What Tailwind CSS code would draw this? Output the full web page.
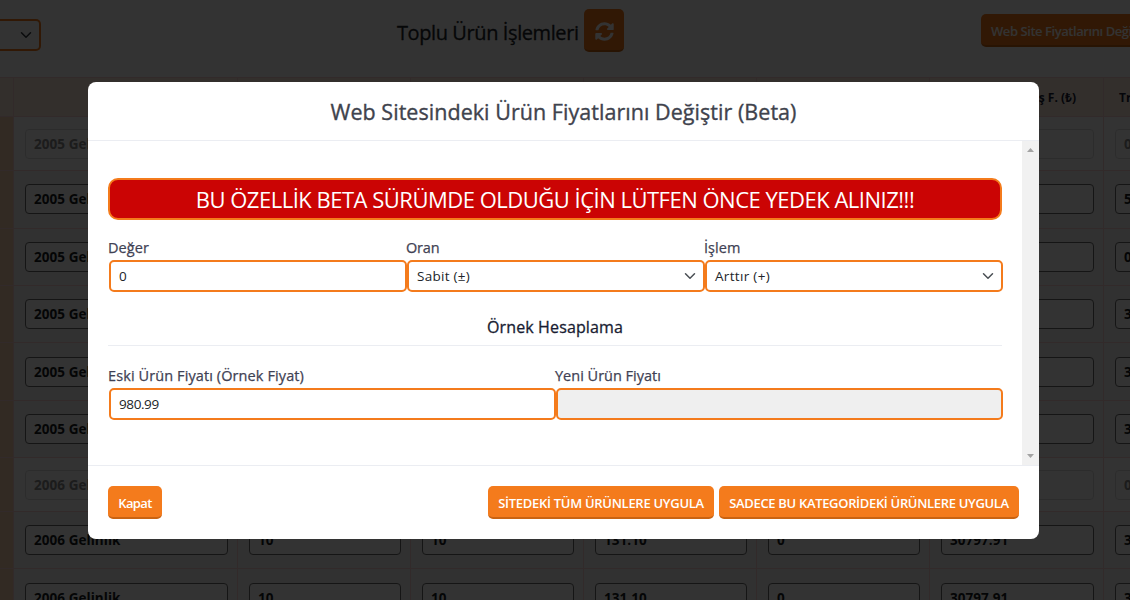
<!DOCTYPE html>
<html lang="tr">
<head>
<meta charset="utf-8">
<title>Toplu Ürün İşlemleri</title>
<script src="https://cdn.jsdelivr.net/npm/@tailwindcss/browser@4"></script>
</head>
<body class="relative h-[600px] w-[1130px] overflow-hidden bg-white font-['Open_Sans','Noto_Sans',sans-serif]">
<main class="w-[1130px] overflow-hidden">
  <header class="flex h-[77px] items-start">
    <div class="mt-[19px] flex h-8 w-[41px] shrink-0 items-center justify-end rounded-r-[5px] border-2 border-l-0 border-[#f47b1c] pr-[7px]">
      <svg class="h-3 w-3" viewBox="0 0 16 16" fill="none" stroke="#343a40" stroke-width="2" stroke-linecap="round" stroke-linejoin="round"><path d="M2 5l6 6 6-6"/></svg>
    </div>
    <h1 class="ml-[356px] mt-[17px] w-[187px] shrink-0 whitespace-nowrap text-[20px] font-medium leading-8 tracking-[-0.405px] text-[#212529] [-webkit-text-stroke:0.3px]">Toplu Ürün İşlemleri</h1>
    <button class="mt-[9px] flex h-[43px] w-10 shrink-0 items-center justify-center rounded-[5px] border-b-2 border-[#c96312] bg-[#f47b1c] pt-[3px]">
      <svg class="h-[19px] w-[19px]" viewBox="0 0 512 512" fill="#fff"><path d="M370.72 133.28C339.458 104.008 298.888 87.962 255.848 88c-77.458.068-144.328 53.178-162.791 126.85-1.344 5.363-6.122 9.15-11.651 9.15H24.103c-7.498 0-13.194-6.807-11.807-14.176C33.933 94.924 134.813 8 256 8c66.448 0 126.791 26.136 171.315 68.685L463.03 40.97C478.149 25.851 504 36.559 504 57.941V192c0 13.255-10.745 24-24 24H345.941c-21.382 0-32.09-25.851-16.971-40.971l41.75-41.749zM32 296h134.059c21.382 0 32.09 25.851 16.971 40.971l-41.75 41.75c31.262 29.273 71.835 45.319 114.876 45.28 77.418-.07 144.315-53.144 162.787-126.849 1.344-5.363 6.122-9.15 11.651-9.15h57.304c7.498 0 13.194 6.807 11.807 14.176C478.067 417.076 377.187 504 256 504c-66.448 0-126.791-26.136-171.315-68.685L48.97 471.03C33.851 486.149 8 475.441 8 454.059V320c0-13.255 10.745-24 24-24z"/></svg>
    </button>
    <button class="ml-[357px] mt-[14px] h-[33px] shrink-0 whitespace-nowrap rounded-[5px] border-b-2 border-[#c96312] bg-[#f47b1c] px-[10px] pt-[5px] text-[13px] font-semibold tracking-[-0.44px] text-white">Web Site Fiyatlarını Değiştir</button>
  </header>
  <div id="grid" class="w-[1290px]"></div>
</main>

<div class="absolute inset-0 bg-black/80"></div>

<section class="absolute left-[88px] top-[82px] flex h-[457px] w-[951px] flex-col overflow-hidden rounded-[8px] bg-white text-[#3f4254]">
  <header class="flex h-[59px] shrink-0 items-center justify-center border-b border-[#ebedf2] pt-[3px] text-[21.5px] font-medium text-[#3f434d] [-webkit-text-stroke:0.35px]"><span class="whitespace-nowrap tracking-[0.045px]">Web Sitesindeki Ürün Fiyatlarını Değiştir (Beta)</span></header>
  <div class="flex h-[324px] shrink-0">
    <div class="flex w-[934px] flex-col px-5 pt-[37px]">
      <div class="flex h-[42px] w-[894px] items-center justify-center rounded-[10px] border-2 border-[#f47b1c] bg-[#cb0404] pt-px text-[22px] text-white"><span class="whitespace-nowrap tracking-[-0.495px]">BU ÖZELLİK BETA SÜRÜMDE OLDUĞU İÇİN LÜTFEN ÖNCE YEDEK ALINIZ!!!</span></div>
      <div class="mt-[18px] flex text-[14.5px] font-medium leading-[20px]">
        <label class="w-[298px]"><span class="tracking-[0.1px] [-webkit-text-stroke:0.25px]">Değer</span>
          <span class="ml-px mt-[2px] flex h-8 w-[298px] items-center rounded-[5px] border-2 border-[#f47b1c] px-2 text-[13.5px] font-normal text-[#212529]">0</span></label>
        <label class="w-[298px]"><span class="tracking-[-0.2px] [-webkit-text-stroke:0.25px]">Oran</span>
          <span class="ml-px mt-[2px] flex h-8 w-[298px] items-center justify-between rounded-[5px] border-2 border-[#f47b1c] pl-2 pr-[7px] text-[13.5px] font-normal text-[#212529]"><span class="tracking-[0.28px]">Sabit (±)</span>
          <svg class="h-3 w-3" viewBox="0 0 16 16" fill="none" stroke="#4a4f54" stroke-width="2" stroke-linecap="round" stroke-linejoin="round"><path d="M2 5l6 6 6-6"/></svg></span></label>
        <label class="w-[298px]"><span class="tracking-[0.05px] [-webkit-text-stroke:0.25px]">İşlem</span>
          <span class="ml-px mt-[2px] flex h-8 w-[298px] items-center justify-between rounded-[5px] border-2 border-[#f47b1c] pl-2 pr-[7px] text-[13.5px] font-normal text-[#212529]"><span class="tracking-[0.32px]">Arttır (+)</span>
          <svg class="h-3 w-3" viewBox="0 0 16 16" fill="none" stroke="#4a4f54" stroke-width="2" stroke-linecap="round" stroke-linejoin="round"><path d="M2 5l6 6 6-6"/></svg></span></label>
      </div>
      <h2 class="mt-[22px] flex h-[32px] items-start justify-center border-b border-[#ebedf2] text-[16px] font-medium leading-[26px] text-[#181c32] [-webkit-text-stroke:0.3px]"><span class="tracking-[0.138px]">Örnek Hesaplama</span></h2>
      <div class="mt-5 flex text-[14.5px] font-medium leading-[20px]">
        <label class="w-[447px]"><span class="tracking-[0.1px] [-webkit-text-stroke:0.25px]">Eski Ürün Fiyatı (Örnek Fiyat)</span>
          <span class="ml-px mt-[2px] flex h-8 w-[447px] items-center rounded-[5px] border-2 border-[#f47b1c] px-2 text-[13.5px] font-normal tracking-[-0.4px] text-[#212529]">980.99</span></label>
        <label class="w-[447px]"><span class="[-webkit-text-stroke:0.25px]">Yeni Ürün Fiyatı</span>
          <span class="ml-px mt-[2px] block h-8 w-[447px] rounded-[5px] border-2 border-[#f47b1c] bg-[#efefef]"></span></label>
      </div>
    </div>
    <div class="flex w-[17px] flex-col items-center justify-between bg-[#f1f1f1] py-[7px]">
      <svg class="h-1 w-[7px]" viewBox="0 0 7 4" fill="#a3a3a3"><path d="M0 4L3.5 0 7 4z"/></svg>
      <svg class="h-1 w-[7px]" viewBox="0 0 7 4" fill="#a3a3a3"><path d="M0 0L3.5 4 7 0z"/></svg>
    </div>
  </div>
  <footer class="flex flex-1 items-start justify-between border-t border-[#ebedf2] px-5 pt-5 text-[13px] font-semibold text-white">
    <button class="flex h-[33px] w-[54px] items-center justify-center rounded-[5px] border-b-2 border-[#c96312] bg-[#f47b1c] pt-[5px] tracking-[-0.6px]">Kapat</button>
    <div class="flex gap-[5px]">
      <button class="flex h-[33px] w-[226px] items-center justify-center whitespace-nowrap rounded-[5px] border-b-2 border-[#c96312] bg-[#f47b1c] pt-[5px] tracking-[-0.283px]">SİTEDEKİ TÜM ÜRÜNLERE UYGULA</button>
      <button class="flex h-[33px] w-[300px] items-center justify-center whitespace-nowrap rounded-[5px] border-b-2 border-[#c96312] bg-[#f47b1c] pt-[5px] tracking-[-0.324px]">SADECE BU KATEGORİDEKİ ÜRÜNLERE UYGULA</button>
    </div>
  </footer>
</section>

<script>
const line = 'border-[#f7cfcf]';
const cols = ['w-[224px] pl-[11px]', 'w-[173px] pl-[11px]', 'w-[173px] pl-[11px]', 'w-[173px] pl-[11px]', 'w-[173px] pl-[11px]', 'w-[174px] pl-[11px]', 'w-[173px] pl-[11px]'];
const boxes = ['w-[203px]', 'w-[152px]', 'w-[152px]', 'w-[152px]', 'w-[152px]', 'w-[153px]', 'w-[152px]'];
const rows = [
  ['h-[54px] pt-[12px]', '2005 Gelinlik', '', '0', true, 'bg-white'],
  ['h-[58px] pt-[13px]', '2005 Gelinlik', '', '5', false, 'bg-[#f5f5f5]'],
  ['h-[57px] pt-[13px]', '2005 Gelinlik', '', '0', false, 'bg-[#f5f5f5]'],
  ['h-[57px] pt-[13px]', '2005 Gelinlik', '', '3', false, 'bg-[#f5f5f5]'],
  ['h-[58px] pt-[14px]', '2005 Gelinlik', '', '3', false, 'bg-[#f5f5f5]'],
  ['h-[57px] pt-[13px]', '2005 Gelinlik', '', '3', false, 'bg-[#f5f5f5]'],
  ['h-[54px] pt-[12px]', '2006 Gelinlik', '', '0', true, 'bg-white'],
  ['h-[57px] pt-[13px]', '2006 Gelinlik', '30797.91', '3', false, 'bg-[#f5f5f5]'],
  ['h-[58px] pt-[14px]', '2006 Gelinlik', '30797.91', '3', false, 'bg-[#f5f5f5]'],
];
const heads = ['', '', '', '', '', 'Satış F. (₺)', 'Trendyol'];
let html = `<div class="flex h-[40px] border-y ${line} bg-[#fdebdd] text-[12px] font-bold text-[#181c32]"><div class="w-[14px] border-r ${line}"></div>` +
  heads.map((h, i) => `<div class="flex items-center border-r pt-px ${line} ${cols[i]} ${i === 5 ? 'justify-end pr-[27px]' : ''}"><span class="${i === 6 ? 'pl-1' : ''}">${h}</span></div>`).join('') + '</div>';
for (const [h, name, price, last, off, bg] of rows) {
  const vals = [name, price ? '10' : '', price ? '10' : '', price ? '131.10' : '', price ? '0' : '', price, last];
  html += `<div class="flex ${bg}"><div class="w-[14px] border-r border-b ${line} bg-[#fbd0ad]"></div>` +
    vals.map((v, i) => `<div class="border-b border-r ${line} ${cols[i]} ${h}"><div class="flex h-[30px] items-center rounded-[4px] border bg-white pt-px ${off ? 'border-[#dcdcdc] text-[#8a8a8a]' : 'border-[#6b6b6b] text-[#181c22]'} ${boxes[i]} px-2 text-[13.5px] font-bold tracking-[0.05px]">${v}</div></div>`).join('') + '</div>';
}
document.getElementById('grid').innerHTML = html;
</script>
</body>
</html>
